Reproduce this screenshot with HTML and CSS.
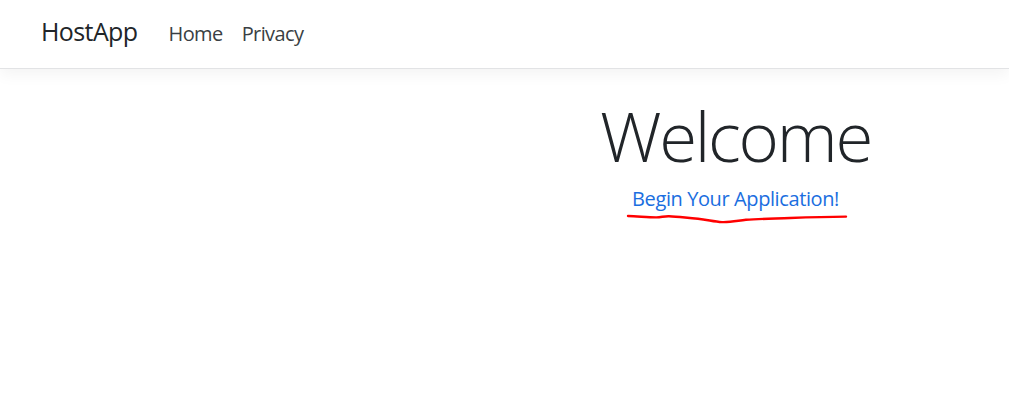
FILE: index.html
```html
<!DOCTYPE html>
<html lang="en">
<head>
<meta charset="utf-8">
<title>HostApp</title>
<link rel="stylesheet" href="styles.css">
</head>
<body>
<header class="navbar">
  <a class="brand" href="#">HostApp</a>
  <nav class="nav">
    <a class="nav-link" href="#">Home</a>
    <a class="nav-link" href="#">Privacy</a>
  </nav>
</header>
<main class="main">
  <div class="spacer"></div>
  <section class="hero">
    <h1 class="display">Welcome</h1>
    <div class="cta-wrap">
      <a class="cta" href="#">Begin Your Application!</a>
      <svg class="scribble" width="230" height="14" viewBox="0 0 230 14" aria-hidden="true">
        <path d="M2 4 C 12 4.4, 22 5.2, 30 5.4 C 35 5.5, 38 4.0, 43 4.2 C 52 4.6, 60 5.8, 72 6.8 C 82 7.8, 88 9.8, 96 10.1 C 104 10.4, 110 9.0, 120 7.8 C 132 6.8, 148 6.6, 164 6.0 C 182 5.3, 202 4.7, 220 4.6" fill="none" stroke="#ff0000" stroke-width="2.4" stroke-linecap="round" stroke-linejoin="round"/>
      </svg>
    </div>
  </section>
</main>
</body>
</html>
```

FILE: styles.css
```css
* { box-sizing: border-box; }
html, body { margin: 0; padding: 0; }
body {
  font-family: "Open Sans", "Noto Sans", sans-serif;
  color: #212529;
  background: #fff;
  width: 1009px;
  height: 408px;
  overflow: hidden;
}
a { text-decoration: none; }
.navbar {
  display: flex;
  align-items: baseline;
  height: 69px;
  padding: 16px 0 0 41px;
  background: #fff;
  border-bottom: 1px solid #e2e3e5;
  box-shadow: 0 5px 15px rgba(0, 0, 0, 0.05);
  position: relative;
}
.brand {
  font-size: 25px;
  line-height: 30px;
  color: #212529;
  margin-right: 31px;
  letter-spacing: -0.6px;
}
.nav { display: flex; gap: 19px; }
.nav-link {
  font-size: 20px;
  line-height: 30px;
  color: #3a3f44;
  letter-spacing: -0.6px;
}
.main {
  display: grid;
  grid-template-columns: 462px 1fr;
}
.hero {
  text-align: center;
  padding-top: 24px;
}
.display {
  margin: 0;
  font-size: 69px;
  font-weight: 300;
  line-height: 84px;
  letter-spacing: -2.3px;
}
.cta-wrap {
  position: relative;
  display: inline-block;
  margin-top: 7px;
}
.cta {
  font-size: 20px;
  line-height: 30px;
  color: #1a6ee0;
  letter-spacing: -0.4px;
}
.scribble {
  position: absolute;
  left: -6px;
  top: 28px;
}
```
